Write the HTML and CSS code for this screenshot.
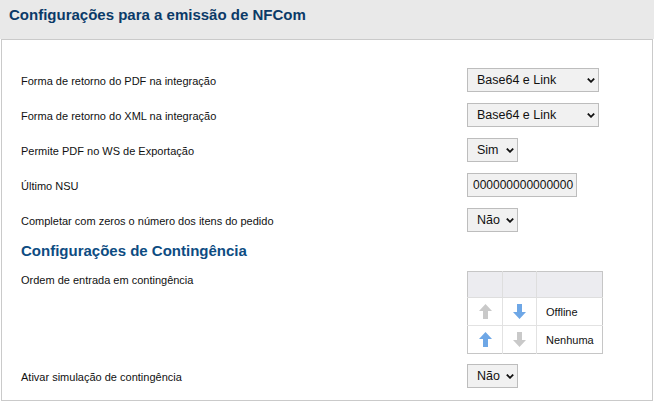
FILE: index.html
```html
<!DOCTYPE html>
<html lang="pt-BR">
<head>
<meta charset="utf-8">
<title>Configurações NFCom</title>
<link rel="stylesheet" href="styles.css">
</head>
<body>
<div class="header">Configurações para a emissão de NFCom</div>
<div class="panel">
  <div class="rows">
    <div class="row">
      <label class="label">Forma de retorno do PDF na integração</label>
      <span class="sel sel-wide">
        <select><option>Base64 e Link</option></select>
        <svg class="chev" viewBox="0 0 8 5" width="8" height="5"><path d="M0.8 0.6 L4 3.8 L7.2 0.6" fill="none" stroke="#111" stroke-width="1.8"/></svg>
      </span>
    </div>
    <div class="row">
      <label class="label">Forma de retorno do XML na integração</label>
      <span class="sel sel-wide">
        <select><option>Base64 e Link</option></select>
        <svg class="chev" viewBox="0 0 8 5" width="8" height="5"><path d="M0.8 0.6 L4 3.8 L7.2 0.6" fill="none" stroke="#111" stroke-width="1.8"/></svg>
      </span>
    </div>
    <div class="row">
      <label class="label">Permite PDF no WS de Exportação</label>
      <span class="sel sel-small">
        <select><option>Sim</option></select>
        <svg class="chev" viewBox="0 0 8 5" width="8" height="5"><path d="M0.8 0.6 L4 3.8 L7.2 0.6" fill="none" stroke="#111" stroke-width="1.8"/></svg>
      </span>
    </div>
    <div class="row">
      <label class="label">Último NSU</label>
      <input class="txt" type="text" value="000000000000000">
    </div>
    <div class="row">
      <label class="label">Completar com zeros o número dos itens do pedido</label>
      <span class="sel sel-small">
        <select><option>Não</option></select>
        <svg class="chev" viewBox="0 0 8 5" width="8" height="5"><path d="M0.8 0.6 L4 3.8 L7.2 0.6" fill="none" stroke="#111" stroke-width="1.8"/></svg>
      </span>
    </div>
  </div>

  <h2 class="subtitle">Configurações de Contingência</h2>

  <div class="row row-top">
    <label class="label label-top">Ordem de entrada em contingência</label>
    <table class="order">
      <thead>
        <tr><th class="c1"></th><th class="c2"></th><th class="c3"></th></tr>
      </thead>
      <tbody>
        <tr>
          <td class="c1"><svg viewBox="0 0 13 15" width="13" height="15"><path d="M6.5 0 L13 7 L9 7 L9 15 L4 15 L4 7 L0 7 Z" fill="#c9c9c9"/></svg></td>
          <td class="c2"><svg viewBox="0 0 13 15" width="13" height="15"><path d="M6.5 15 L13 8 L9 8 L9 0 L4 0 L4 8 L0 8 Z" fill="#6ea7e6"/></svg></td>
          <td class="c3">Offline</td>
        </tr>
        <tr>
          <td class="c1"><svg viewBox="0 0 13 15" width="13" height="15"><path d="M6.5 0 L13 7 L9 7 L9 15 L4 15 L4 7 L0 7 Z" fill="#6ea7e6"/></svg></td>
          <td class="c2"><svg viewBox="0 0 13 15" width="13" height="15"><path d="M6.5 15 L13 8 L9 8 L9 0 L4 0 L4 8 L0 8 Z" fill="#c9c9c9"/></svg></td>
          <td class="c3">Nenhuma</td>
        </tr>
      </tbody>
    </table>
  </div>

  <div class="row row-last">
    <label class="label">Ativar simulação de contingência</label>
    <span class="sel sel-small">
      <select><option>Não</option></select>
      <svg class="chev" viewBox="0 0 8 5" width="8" height="5"><path d="M0.8 0.6 L4 3.8 L7.2 0.6" fill="none" stroke="#111" stroke-width="1.8"/></svg>
    </span>
  </div>
</div>
</body>
</html>
```
FILE: styles.css
```css
* { box-sizing: border-box; }

html, body {
  margin: 0;
  padding: 0;
  background: #ffffff;
  font-family: "Liberation Sans", Arial, sans-serif;
  color: #111;
}

.header {
  height: 39px;
  background: #e9e9e9;
  padding: 6px 0 0 9px;
  font-size: 15px;
  line-height: 17px;
  font-weight: bold;
  color: #0b3a68;
}

.panel {
  margin-left: 1px;
  width: 652px;
  height: 362px;
  border: 1px solid #cacaca;
  padding: 28px 0 0 19px;
}

.rows {
  display: flex;
  flex-direction: column;
  gap: 11px;
}

.row {
  display: grid;
  grid-template-columns: 446px auto;
  align-items: center;
  justify-items: start;
  min-height: 24px;
}

.label {
  font-size: 11px;
  line-height: 13px;
  padding-top: 2px;
  color: #111;
}

.sel {
  position: relative;
  display: inline-block;
  height: 24px;
}

.sel select {
  appearance: none;
  -webkit-appearance: none;
  display: block;
  height: 24px;
  border: 1px solid #bdbdbd;
  border-radius: 0;
  background: #f1f1f1;
  font-family: "Liberation Sans", Arial, sans-serif;
  font-size: 12.5px;
  color: #111;
  padding: 0 0 0 9px;
  margin: 0;
  outline: none;
}

.sel-wide select { width: 132px; }
.sel-small select { width: 51px; }

.chev {
  position: absolute;
  right: 4px;
  top: 10px;
  pointer-events: none;
}

.txt {
  width: 110px;
  height: 24px;
  border: 1px solid #bdbdbd;
  border-radius: 0;
  background: #f1f1f1;
  font-family: "Liberation Sans", Arial, sans-serif;
  font-size: 12px;
  color: #111;
  padding: 0 0 0 5px;
  margin: 0;
  outline: none;
}

.subtitle {
  margin: 10px 0 0 0;
  font-size: 15px;
  line-height: 18px;
  font-weight: bold;
  color: #0d4c82;
}

.row-top {
  align-items: start;
  margin-top: 11px;
}

.label-top {
  margin-top: 1px;
}

.order {
  border-collapse: collapse;
  border: 1px solid #c6c6c6;
  font-size: 11px;
}

.order th {
  height: 26px;
  background: #ececf0;
  border: 1px solid #dedede;
  border-top: none;
  padding: 0;
}

.order td {
  border: 1px solid #e2e2e2;
  padding: 0;
  height: 28px;
  text-align: center;
  vertical-align: middle;
}

.order td svg { display: block; margin: 0 auto; }

.order .c1 { width: 35px; border-left: none; }
.order .c2 { width: 34px; }
.order .c3 {
  width: 66px;
  text-align: left;
  padding-left: 9px;
  border-right: none;
  color: #111;
}

.order tbody tr:last-child td { border-bottom: none; }

.row-last {
  margin-top: 10px;
}
```
